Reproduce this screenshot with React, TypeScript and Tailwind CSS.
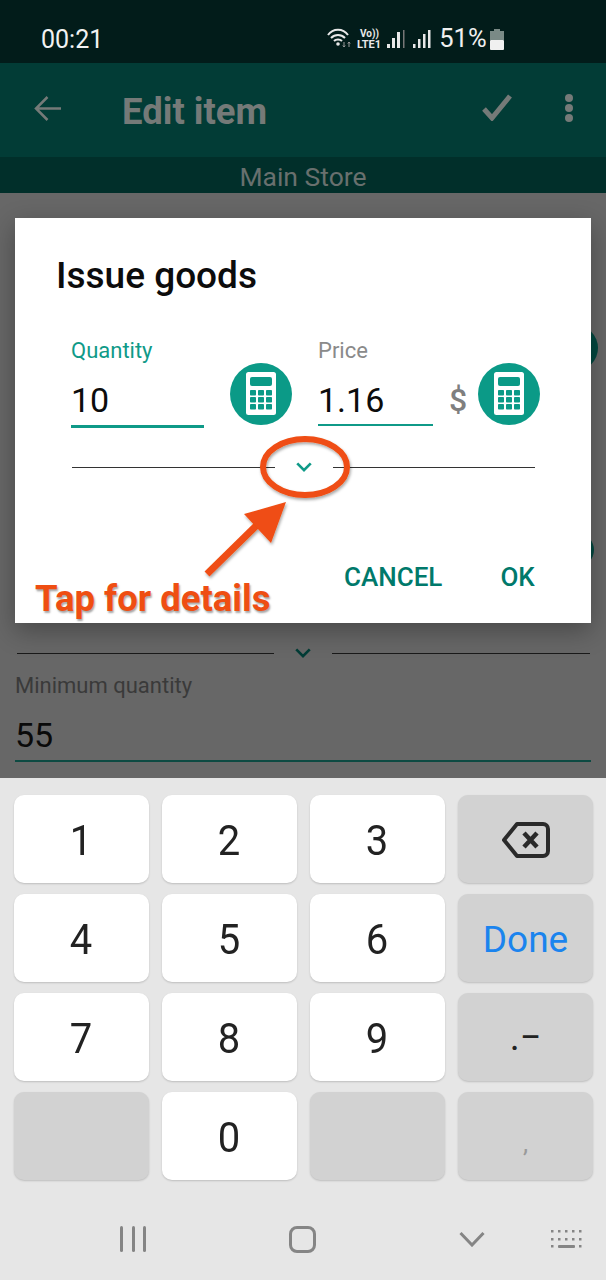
import React from "react";

const Calc = () => (
  <svg width="62" height="62" viewBox="0 0 62 62" className="shrink-0">
    <circle cx="31" cy="31" r="31" fill="#0b9a87" />
    <rect x="16" y="9" width="30" height="43" rx="2.5" fill="#fff" />
    <rect x="20" y="14" width="22" height="9" rx="2" fill="#0b9a87" />
    {[27, 34, 41].map((y) =>
      [20, 28, 36].map((x) => (
        <rect key={`${x}-${y}`} x={x} y={y} width="6" height="5.5" rx="0.8" fill="#0b9a87" />
      ))
    )}
  </svg>
);

const Chevron = ({ color }: { color: string }) => (
  <svg width="20" height="14" viewBox="0 0 20 14" fill="none">
    <path d="M2.5 3 L10 10.5 L17.5 3" stroke={color} strokeWidth="3" />
  </svg>
);

const Key = ({ children, dark }: { children?: React.ReactNode; dark?: boolean }) => (
  <div
    className={`flex h-[88px] items-center justify-center rounded-[10px] text-[#222222] shadow-[0_1px_2px_rgba(0,0,0,0.18)] ${
      dark ? "bg-[#d2d2d2]" : "bg-white"
    }`}
  >
    {children}
  </div>
);

const Digit = ({ children }: { children: React.ReactNode }) => (
  <span className="mt-[3px] inline-block scale-x-[0.93] text-[43px] font-normal leading-none">{children}</span>
);

export default function App() {
  return (
    <div className="relative flex h-[1280px] w-[606px] flex-col overflow-hidden bg-[#e6e6e6] font-['Roboto',sans-serif]">
      {/* status bar */}
      <div className="flex h-[63px] shrink-0 items-center bg-[#021c1a] pt-[15px] text-white">
        <span className="ml-[41px] text-[25px] leading-none text-[#f2f2f2]">00:21</span>
        <svg width="113" height="30" viewBox="0 0 113 30" className="ml-[224px]" fill="none">
          <g stroke="#e8e8e8" strokeWidth="2">
            <path d="M1 11 C6 4 16 4 21 11" />
            <path d="M4 14 C8 10 14 10 18 14" />
            <path d="M7 17 C9 15 13 15 15 17" />
          </g>
          <circle cx="11" cy="20" r="1.8" fill="#e8e8e8" />
          <path d="M17 18v5M15.8 21.5l1.2 1.5 1.2-1.5M22 23v-5M20.8 19.5l1.2-1.5 1.2 1.5" stroke="#999" strokeWidth="1" />
          <text x="33" y="13" fontSize="10" fontWeight="700" fill="#e8e8e8" fontFamily="Roboto, sans-serif">Vo))</text>
          <text x="30" y="24" fontSize="11" fontWeight="700" fill="#e8e8e8" fontFamily="Roboto, sans-serif">LTE1</text>
          <g fill="#e8e8e8">
            <rect x="60" y="20" width="3" height="4" />
            <rect x="65" y="14" width="3" height="10" />
            <rect x="70" y="8" width="3" height="16" />
            <rect x="76" y="6" width="1.5" height="18" fill="#777" />
            <rect x="86" y="20" width="2.5" height="4" />
            <rect x="91" y="15" width="2.5" height="9" />
            <rect x="96" y="10" width="2.5" height="14" />
            <rect x="101" y="6" width="2.5" height="18" />
          </g>
        </svg>
        <span className="ml-[-1px] text-[25.5px] leading-none text-[#f0f0f0]">51%</span>
        <svg width="14" height="21" viewBox="0 0 14 21" className="ml-[3px]">
          <rect x="4" y="0" width="6" height="3" fill="#7a8a86" />
          <rect x="0" y="2" width="14" height="9" fill="#7a8a86" />
          <rect x="0" y="11" width="14" height="10" rx="1" fill="#f0f0f0" />
        </svg>
      </div>

      {/* app bar */}
      <div className="flex h-[94px] shrink-0 items-center bg-[#023c36]">
        <svg width="27" height="25" viewBox="0 0 27 25" fill="none" className="ml-[34px] mt-[-4px]" stroke="#757a78" strokeWidth="2.5">
          <path d="M27 12.5 H3 M13.5 1 L2 12.5 L13.5 24" />
        </svg>
        <span className="ml-[61px] mt-[4px] text-[36.5px] font-bold leading-none text-[#757a78]">Edit item</span>
        <svg width="30" height="27" viewBox="0 0 30 27" fill="none" className="ml-[215px] mt-[-5px]" stroke="#757a78" strokeWidth="5">
          <path d="M2 15 L10 24 L28 2" />
        </svg>
        <div className="ml-[53px] mt-[-4px] flex flex-col gap-[2px]">
          <div className="h-[8px] w-[8px] rounded-full bg-[#757a78]" />
          <div className="h-[8px] w-[8px] rounded-full bg-[#757a78]" />
          <div className="h-[8px] w-[8px] rounded-full bg-[#757a78]" />
        </div>
      </div>
      <div className="flex h-[36px] shrink-0 items-center justify-center bg-[#012f2a] pt-[4px] text-[26.5px] leading-none text-[#68706e]">Main Store</div>

      {/* dimmed form */}
      <div className="relative flex h-[585px] shrink-0 flex-col bg-[#676767] pl-[15px] pr-[15px] pt-[453px]">
        <div className="absolute right-[8px] top-[132px] h-[46px] w-[46px] rounded-full bg-[#02473f]" />
        <div className="absolute right-[12px] top-[340px] h-[34px] w-[34px] rounded-full bg-[#02473f]" />
        <div className="flex items-center pl-[2px]">
          <div className="h-[1px] w-[257px] bg-[#1a1a1a]" />
          <div className="ml-[20px] flex w-[18px] justify-center">
            <Chevron color="#023c36" />
          </div>
          <div className="ml-[20px] h-[1px] w-[258px] bg-[#1a1a1a]" />
        </div>
        <div className="mt-[13px] text-[22px] leading-[26px] text-[#3a3a3a]">Minimum quantity</div>
        <div className="mt-[14px] h-[49px] border-b-2 border-[#0d4a42] text-[34px] leading-[44px] text-[#0a0a0a]">55</div>
      </div>

      {/* keyboard */}
      <div className="flex flex-1 flex-col">
        <div className="grid grid-cols-4 gap-x-[13px] gap-y-[11px] pl-[14px] pr-[13px] pt-[17px]">
          <Key><Digit>1</Digit></Key>
          <Key><Digit>2</Digit></Key>
          <Key><Digit>3</Digit></Key>
          <Key dark>
            <svg width="48" height="36" viewBox="0 0 48 36" fill="none" stroke="#2a2a2a" strokeWidth="4" strokeLinejoin="round" className="mt-[2px]">
              <path d="M15 2 H41 a5 5 0 0 1 5 5 V29 a5 5 0 0 1-5 5 H15 L2 18 Z" />
              <path d="M22 11 L35 25 M35 11 L22 25" strokeWidth="4.5" />
            </svg>
          </Key>
          <Key><Digit>4</Digit></Key>
          <Key><Digit>5</Digit></Key>
          <Key><Digit>6</Digit></Key>
          <Key dark>
            <span className="mt-[3px] text-[37px] leading-none text-[#1b84ee]">Done</span>
          </Key>
          <Key><Digit>7</Digit></Key>
          <Key><Digit>8</Digit></Key>
          <Key><Digit>9</Digit></Key>
          <Key dark>
            <span className="text-[38px] leading-none">.−</span>
          </Key>
          <Key dark />
          <Key><Digit>0</Digit></Key>
          <Key dark />
          <Key dark>
            <span className="mt-[14px] text-[26px] leading-none text-[#9a9a9a]">,</span>
          </Key>
        </div>
        <div className="flex flex-1 items-center pt-[18px]">
          <div className="ml-[120px] flex w-[26px] justify-between">
            <div className="h-[26px] w-[3px] rounded-full bg-[#858585]" />
            <div className="h-[26px] w-[3px] rounded-full bg-[#858585]" />
            <div className="h-[26px] w-[3px] rounded-full bg-[#858585]" />
          </div>
          <div className="ml-[143px] h-[27px] w-[27px] rounded-[8px] border-[3px] border-[#858585]" />
          <svg width="26" height="16" viewBox="0 0 26 16" fill="none" className="ml-[143px]" stroke="#858585" strokeWidth="3">
            <path d="M1.5 2 L13 14 L24.5 2" />
          </svg>
          <svg width="32" height="20" viewBox="0 0 32 20" className="ml-[66px]" fill="#858585">
            {[1, 8, 15, 22, 29].map((x) => (
              <rect key={x} x={x - 1} y="1" width="2.5" height="2.5" />
            ))}
            {[1, 8, 15, 22, 29].map((x) => (
              <rect key={x} x={x - 1} y="9" width="2.5" height="2.5" />
            ))}
            <rect x="0" y="16" width="2.5" height="2.5" />
            <rect x="7" y="16" width="17" height="3" rx="1" />
            <rect x="28" y="16" width="2.5" height="2.5" />
          </svg>
        </div>
      </div>

      {/* dialog */}
      <div className="absolute left-[15px] top-[218px] flex h-[405px] w-[576px] flex-col bg-white shadow-[0_8px_24px_rgba(0,0,0,0.3)]">
        <div className="ml-[41px] mt-[37px] text-[37px] font-medium leading-[42px] text-[#0c0c0c]">Issue goods</div>
        <div className="ml-[56px] mt-[41px] flex items-start">
          <div className="w-[133px]">
            <div className="text-[22px] leading-[26px] text-[#0f9a88]">Quantity</div>
            <div className="mt-[12px] h-[52px] border-b-[3px] border-[#0f9a88] text-[34px] leading-[48px] text-[#0c0c0c]">10</div>
          </div>
          <div className="ml-[26px] mt-[25px]">
            <Calc />
          </div>
          <div className="ml-[26px] w-[115px]">
            <div className="text-[22px] leading-[26px] text-[#8a8a8a]">Price</div>
            <div className="mt-[12px] h-[50px] border-b-2 border-[#0f9a88] text-[34px] leading-[48px] text-[#0c0c0c]">1.16</div>
          </div>
          <div className="ml-[16px] mt-[42px] text-[32px] font-medium leading-[40px] text-[#7f7f7f]">$</div>
          <div className="ml-[11px] mt-[25px]">
            <Calc />
          </div>
        </div>
        <div className="ml-[57px] mt-[32px] flex items-center">
          <div className="h-[1px] w-[203px] bg-[#333333]" />
          <div className="ml-[20px] flex w-[18px] justify-center">
            <Chevron color="#0f9a88" />
          </div>
          <div className="ml-[20px] h-[1px] w-[202px] bg-[#333333]" />
        </div>
        <div className="ml-[329px] mt-[88px] flex text-[26px] font-medium leading-[30px] text-[#00796b]">
          <span>CANCEL</span>
          <span className="ml-[58px]">OK</span>
        </div>
      </div>

      {/* annotation */}
      <svg width="606" height="1280" viewBox="0 0 606 1280" fill="none" className="pointer-events-none absolute left-0 top-0">
        <defs>
          <filter id="s" x="-20%" y="-20%" width="140%" height="140%">
            <feDropShadow dx="1" dy="2" stdDeviation="1.5" floodColor="#000" floodOpacity="0.35" />
          </filter>
        </defs>
        <g filter="url(#s)">
          <ellipse cx="305" cy="467" rx="42" ry="28" stroke="#ef4e12" strokeWidth="6" />
          <path d="M207 574 L262 520" stroke="#ef4e12" strokeWidth="7" />
          <path d="M286 502 L244 514 L271 543 Z" fill="#ef4e12" />
        </g>
      </svg>
      <div className="absolute left-[35px] top-[580px] text-[36.5px] font-bold leading-[38px] text-[#ef4e12] [text-shadow:1px_2px_2px_rgba(0,0,0,0.35)]">Tap for details</div>
    </div>
  );
}
